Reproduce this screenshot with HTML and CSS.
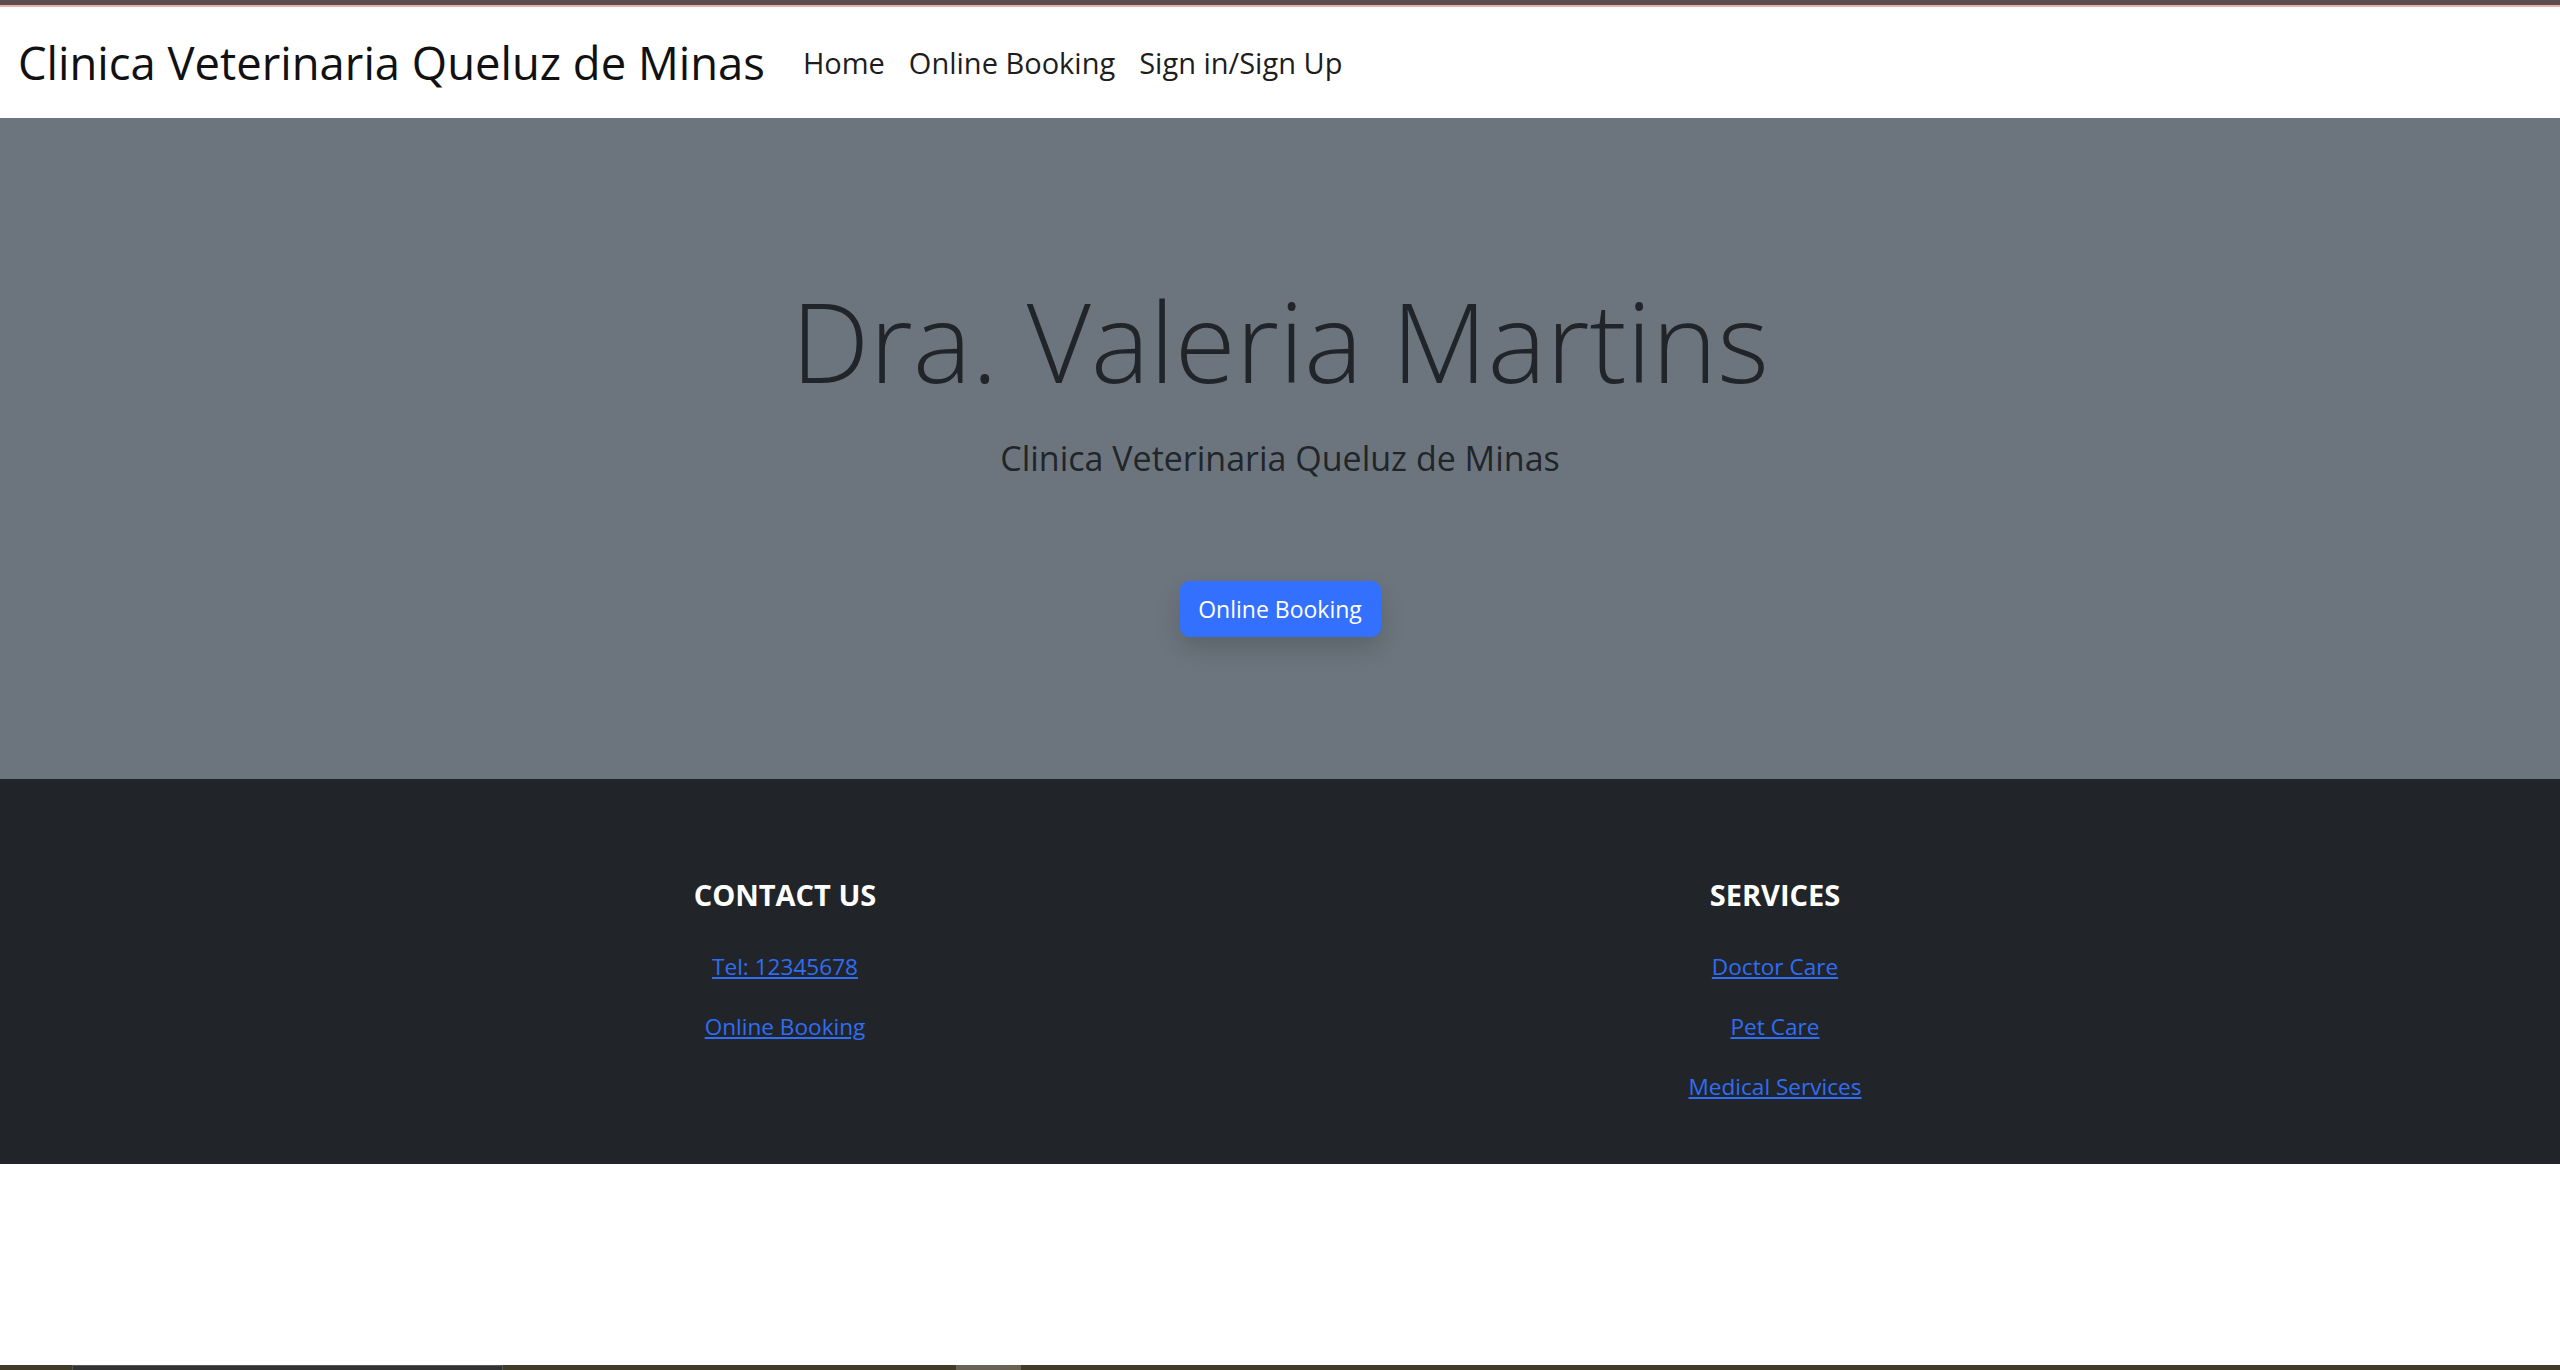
FILE: index.html
```html
<!DOCTYPE html>
<html lang="pt">
<head>
<meta charset="utf-8">
<title>Clinica Veterinaria Queluz de Minas</title>
<link rel="stylesheet" href="styles.css">
</head>
<body>
<div class="top-strip"></div>
<nav class="navbar">
  <a class="brand" href="#">Clinica Veterinaria Queluz de Minas</a>
  <ul class="nav-links">
    <li><a class="nav-link active" href="#">Home</a></li>
    <li><a class="nav-link" href="#">Online Booking</a></li>
    <li><a class="nav-link" href="#">Sign in/Sign Up</a></li>
  </ul>
</nav>
<header class="hero">
  <h1 class="hero-title">Dra. Valeria Martins</h1>
  <p class="hero-lead">Clinica Veterinaria Queluz de Minas</p>
  <a class="btn-primary" href="#">Online Booking</a>
</header>
<footer class="footer">
  <div class="footer-row">
    <div class="footer-col">
      <h5 class="footer-heading">CONTACT US</h5>
      <p><a href="#">Tel: 12345678</a></p>
      <p><a href="#">Online Booking</a></p>
    </div>
    <div class="footer-col">
      <h5 class="footer-heading">SERVICES</h5>
      <p><a href="#">Doctor Care</a></p>
      <p><a href="#">Pet Care</a></p>
      <p><a href="#">Medical Services</a></p>
    </div>
  </div>
</footer>
<div class="spacer"></div>
<div class="bottom-strip">
  <span class="seg seg-a"></span>
  <span class="seg seg-b"></span>
  <span class="seg seg-c"></span>
  <span class="seg seg-d"></span>
  <span class="seg seg-e"></span>
</div>
</body>
</html>
```
FILE: styles.css
```css
* { box-sizing: border-box; }
html, body { margin: 0; padding: 0; }
body {
  font-family: "Open Sans", "Noto Sans", "Liberation Sans", sans-serif;
  color: #212529;
  background: #fff;
  min-height: 100vh;
  display: flex;
  flex-direction: column;
}
.top-strip {
  height: 7px;
  background: #5f4e4e;
  border-bottom: 2px solid #e9b1ad;
}
.navbar {
  height: 111px;
  display: flex;
  align-items: center;
  padding: 0 18px;
  background: #fff;
}
.brand {
  font-size: 45.4px;
  color: #111;
  text-decoration: none;
  margin-right: 26px;
  line-height: 1.5;
}
.nav-links {
  list-style: none;
  display: flex;
  margin: 0;
  padding: 0;
}
.nav-link {
  display: block;
  padding: 0 12px;
  font-size: 29px;
  color: #1d1d1d;
  text-decoration: none;
  line-height: 1.5;
}
.hero {
  height: 661px;
  background: #6c757d;
  display: flex;
  flex-direction: column;
  align-items: center;
  padding-top: 150px;
}
.hero-title {
  margin: 0;
  font-size: 111px;
  font-weight: 300;
  line-height: 144px;
  color: #212529;
}
.hero-lead {
  margin: 24px 0 0;
  font-size: 34px;
  font-weight: 400;
  line-height: 45px;
  color: #212529;
}
.btn-primary {
  margin-top: 100px;
  display: inline-block;
  width: 201px;
  height: 56px;
  line-height: 54px;
  text-align: center;
  font-size: 23px;
  color: #fff;
  background: #3370fd;
  border: 1px solid #3370fd;
  border-radius: 9px;
  text-decoration: none;
  box-shadow: 0 12px 24px rgba(0, 0, 0, 0.15);
}
.footer {
  height: 385px;
  background: #212529;
  padding: 98px 0 0;
}
.footer-row {
  width: 1980px;
  margin: 0 auto;
  display: grid;
  grid-template-columns: 1fr 1fr;
}
.footer-col {
  text-align: center;
  padding: 0 18px;
}
.footer-heading {
  margin: 0 0 36px;
  font-size: 29px;
  font-weight: 700;
  line-height: 36px;
  color: #fff;
}
.footer-col p {
  margin: 0 0 24px;
  font-size: 22.6px;
  line-height: 36px;
}
.footer-col a {
  color: #2f6df5;
  text-decoration: underline;
}
.spacer { flex: 1; }
.bottom-strip {
  height: 5px;
  background: #433b2a;
  display: flex;
}
.seg { display: block; height: 5px; }
.seg-a { width: 72px; }
.seg-b { width: 431px; background: #333; border: 1px solid #555; border-bottom: 0; }
.seg-c { width: 453px; }
.seg-d { width: 65px; background: #6b6256; }
.seg-e { flex: 1; }
```
